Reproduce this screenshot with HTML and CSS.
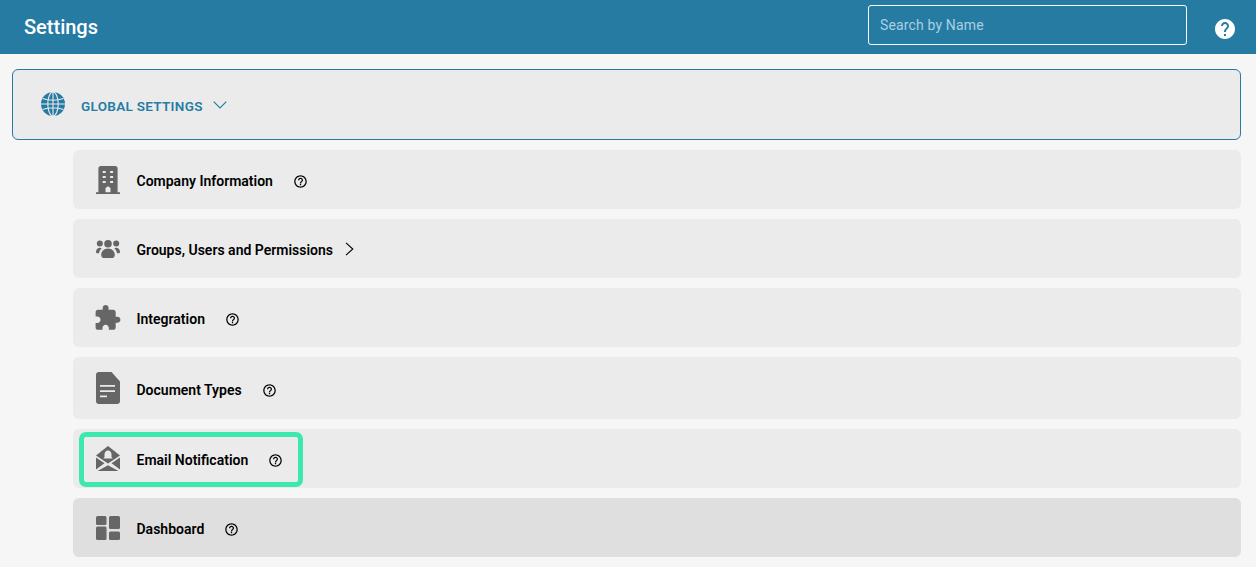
FILE: index.html
```html
<!DOCTYPE html>
<html lang="en">
<head>
<meta charset="utf-8">
<title>Settings</title>
<link rel="stylesheet" href="styles.css">
</head>
<body>
<header class="topbar">
  <h1 class="title">Settings</h1>
  <input class="search" type="text" placeholder="Search by Name">
  <svg class="top-help" viewBox="0 0 24 24"><path d="M12 2C6.48 2 2 6.48 2 12s4.48 10 10 10 10-4.48 10-10S17.52 2 12 2zm1 17h-2v-2h2v2zm2.07-7.75l-.9.92C13.45 12.9 13 13.5 13 15h-2v-.5c0-1.1.45-2.1 1.17-2.83l1.24-1.26c.37-.36.59-.86.59-1.41 0-1.1-.9-2-2-2s-2 .9-2 2H8c0-2.21 1.79-4 4-4s4 1.79 4 4c0 .88-.36 1.68-.93 2.25z"/></svg>
</header>
<main class="content">
  <section class="global">
    <svg class="globe" viewBox="0 0 24 24">
      <circle class="globe-fill" cx="12" cy="12" r="12"/>
      <g class="globe-lines">
        <ellipse cx="12" cy="12" rx="5.2" ry="12"/>
        <path d="M12 0v24M1.500 6.500c6 2.300 15 2.300 21 0M1.500 17.500c6-2.300 15-2.300 21 0M0 12h24"/>
      </g>
    </svg>
    <span class="global-label">GLOBAL SETTINGS</span>
    <svg class="chevron-down" viewBox="0 0 14 8"><path d="M.7.7 7 7 13.300.7"/></svg>
  </section>
  <div class="list">
    <div class="row">
      <span class="icon-box"><svg class="icon" width="24" height="28" viewBox="0 0 24 28"><path fill-rule="evenodd" d="M2.400 2.500A2.500 2.500 0 0 1 4.900 0h14.200a2.500 2.500 0 0 1 2.500 2.500V26.300H24V28H0v-1.700h2.400zM6.700 5v2h3V5zm7.400 0v2h3V5zM6.700 10v2h3v-2zm7.400 0v2h3v-2zM6.700 15v2h3v-2zm7.400 0v2h3v-2zM9.500 26.300h5v-4.300l-2.500-1.800-2.500 1.800z"/></svg></span>
      <span class="label">Company Information</span>
      <svg class="help" viewBox="0 0 24 24"><path d="M11 18h2v-2h-2v2zm1-16C6.480 2 2 6.480 2 12s4.480 10 10 10 10-4.480 10-10S17.520 2 12 2zm0 18c-4.410 0-8-3.590-8-8s3.590-8 8-8 8 3.590 8 8-3.590 8-8 8zm0-14c-2.210 0-4 1.790-4 4h2c0-1.100.9-2 2-2s2 .9 2 2c0 2-3 1.750-3 5h2c0-2.250 3-2.500 3-5 0-2.210-1.790-4-4-4z"/></svg>
    </div>
    <div class="row">
      <span class="icon-box"><svg class="icon" width="24" height="18" viewBox="0 0 24 18"><circle cx="3.800" cy="3.400" r="3"/><circle cx="12" cy="3.800" r="3.800"/><circle cx="20.200" cy="3.400" r="3"/><path d="M3.800 7.700c.7 0 1.400.2 2 .5-1.500 1.200-2.500 2.900-2.800 5H1c-.7 0-1-.5-1-1.200 0-2.500 1.700-4.300 3.800-4.300zM20.200 7.700c-.7 0-1.400.2-2 .5 1.500 1.200 2.500 2.900 2.800 5h2c.7 0 1-.5 1-1.200 0-2.500-1.700-4.300-3.800-4.300zM12 8.500c4 0 6.800 3 6.800 6.300 0 2-1 3.200-2.300 3.200h-9c-1.300 0-2.300-1.200-2.300-3.200C5.200 11.500 8 8.500 12 8.500z"/></svg></span>
      <span class="label">Groups, Users and Permissions</span>
      <svg class="chevron-right" viewBox="0 0 9 14"><path d="M1 .8 7.800 7 1 13.200"/></svg>
    </div>
    <div class="row">
      <span class="icon-box"><svg class="icon" width="26" height="26" viewBox="1.500 1 22 22"><path d="M20.500 11H19V7c0-1.100-.9-2-2-2h-4V3.500C13 2.120 11.880 1 10.500 1S8 2.120 8 3.500V5H4c-1.100 0-1.990.9-1.990 2v3.800H3.500c1.490 0 2.700 1.210 2.700 2.700s-1.210 2.700-2.700 2.700H2V20c0 1.100.9 2 2 2h3.800v-1.500c0-1.490 1.210-2.700 2.700-2.700 1.490 0 2.700 1.210 2.700 2.700V22H17c1.100 0 2-.9 2-2v-4h1.500c1.380 0 2.500-1.120 2.500-2.500S21.880 11 20.500 11z"/></svg></span>
      <span class="label">Integration</span>
      <svg class="help" viewBox="0 0 24 24"><path d="M11 18h2v-2h-2v2zm1-16C6.480 2 2 6.480 2 12s4.480 10 10 10 10-4.480 10-10S17.520 2 12 2zm0 18c-4.410 0-8-3.590-8-8s3.590-8 8-8 8 3.590 8 8-3.590 8-8 8zm0-14c-2.210 0-4 1.790-4 4h2c0-1.100.9-2 2-2s2 .9 2 2c0 2-3 1.750-3 5h2c0-2.250 3-2.500 3-5 0-2.210-1.790-4-4-4z"/></svg>
    </div>
    <div class="row row-tall">
      <span class="icon-box"><svg class="icon" width="24" height="32" viewBox="0 0 24 32"><path fill-rule="evenodd" d="M3 0h12.500L24 9.500V29a3 3 0 0 1-3 3H3a3 3 0 0 1-3-3V3a3 3 0 0 1 3-3zM4 13v1.800h15V13zm0 5.200V20h15v-1.800zM4 23.400v1.800h7v-1.800z"/></svg></span>
      <span class="label">Document Types</span>
      <svg class="help" viewBox="0 0 24 24"><path d="M11 18h2v-2h-2v2zm1-16C6.480 2 2 6.480 2 12s4.480 10 10 10 10-4.480 10-10S17.520 2 12 2zm0 18c-4.410 0-8-3.590-8-8s3.590-8 8-8 8 3.590 8 8-3.590 8-8 8zm0-14c-2.210 0-4 1.790-4 4h2c0-1.100.9-2 2-2s2 .9 2 2c0 2-3 1.750-3 5h2c0-2.250 3-2.500 3-5 0-2.210-1.790-4-4-4z"/></svg>
    </div>
    <div class="row">
      <span class="icon-box"><svg class="icon" width="24" height="25" viewBox="0 0 24 25"><path fill-rule="evenodd" d="M12 0 24 9.500 12 17.500 0 9.500zM12 4.500c-2.300 0-3.500 1.900-3.500 4v2.800l-1.300 1.200h9.600l-1.300-1.200V8.500c0-2.100-1.200-4-3.500-4z"/><path d="M0 11.500 8.500 17.200 0 23.500zM24 11.500 15.500 17.200 24 23.500zM12 19.300 22.500 25H1.500z"/></svg></span>
      <span class="label">Email Notification</span>
      <svg class="help" viewBox="0 0 24 24"><path d="M11 18h2v-2h-2v2zm1-16C6.480 2 2 6.480 2 12s4.480 10 10 10 10-4.480 10-10S17.520 2 12 2zm0 18c-4.410 0-8-3.590-8-8s3.590-8 8-8 8 3.590 8 8-3.590 8-8 8zm0-14c-2.210 0-4 1.790-4 4h2c0-1.100.9-2 2-2s2 .9 2 2c0 2-3 1.750-3 5h2c0-2.250 3-2.500 3-5 0-2.210-1.790-4-4-4z"/></svg>
      <span class="highlight"></span>
    </div>
    <div class="row row-active">
      <span class="icon-box"><svg class="icon" width="24" height="24" viewBox="0 0 24 24"><rect width="10.500" height="9" rx="1.500"/><rect y="10.500" width="10.500" height="13.500" rx="1.500"/><rect x="13" width="11" height="13" rx="1.500"/><rect x="13" y="15.500" width="11" height="8.500" rx="1.500"/></svg></span>
      <span class="label">Dashboard</span>
      <svg class="help" viewBox="0 0 24 24"><path d="M11 18h2v-2h-2v2zm1-16C6.480 2 2 6.480 2 12s4.480 10 10 10 10-4.480 10-10S17.520 2 12 2zm0 18c-4.410 0-8-3.590-8-8s3.590-8 8-8 8 3.590 8 8-3.590 8-8 8zm0-14c-2.210 0-4 1.790-4 4h2c0-1.100.9-2 2-2s2 .9 2 2c0 2-3 1.750-3 5h2c0-2.250 3-2.500 3-5 0-2.210-1.790-4-4-4z"/></svg>
    </div>
  </div>
</main>
</body>
</html>
```

FILE: styles.css
```css
* { box-sizing: border-box; }
html, body { margin: 0; height: 100%; overflow: hidden; }
body { background: #f6f6f6; font-family: Roboto, "Liberation Sans", sans-serif; color: #000; }

.topbar { display: flex; align-items: center; height: 54px; padding: 0 19px 0 24px; background: #267ba3; }
.title { margin: 0 auto 0 0; font-size: 20px; font-weight: 500; color: #fff; }
.search { width: 319px; height: 40px; margin-bottom: 4px; padding: 0 11px; background: transparent; border: 1px solid #fff; border-radius: 3px; font: 400 14px Roboto, sans-serif; letter-spacing: .15px; color: #fff; outline: none; }
.search::placeholder { color: #a9d0e1; opacity: 1; }
.top-help { width: 24px; height: 24px; margin: 4px 0 0 26px; fill: #fff; }

.content { padding: 15px 15px 0 12px; }
.global { display: flex; align-items: center; height: 71px; padding-left: 28px; background: #ebebeb; border: 1px solid #267ba3; border-radius: 6px; }
.globe { width: 24px; height: 24px; margin-bottom: 2px; }
.globe-fill { fill: #267ba3; }
.globe-lines { fill: none; stroke: #ebebeb; stroke-width: 1.100; }
.global-label { margin-left: 16px; padding-top: 3px; font-size: 13.5px; font-weight: 600; letter-spacing: .3px; color: #267ba3; }
.chevron-down { width: 14px; height: 8px; margin: 1px 0 0 10px; fill: none; stroke: #267ba3; stroke-width: 1.200; }

.list { display: flex; flex-direction: column; gap: 10px; margin: 10px 0 0 61px; }
.row { position: relative; display: flex; align-items: center; height: 59px; padding-left: 23px; background: #ebebeb; border-radius: 6px; }
.row-tall { height: 62px; }
.row-active { background: #dfdfdf; }
.icon-box { display: flex; justify-content: center; width: 24px; margin-right: 16.5px; }
.icon { flex: none; fill: #666; }
.label { padding-top: 3px; font-size: 14px; font-weight: 600; color: #000; }
.help { width: 15px; height: 15px; margin: 4px 0 0 20px; fill: #000; }
.chevron-right { width: 9px; height: 14px; margin-left: 12px; fill: none; stroke: #000; stroke-width: 1.100; }
.highlight { position: absolute; left: 6px; top: 3px; width: 224px; height: 55px; border: 5px solid #3de8ae; border-radius: 7px; }
```
